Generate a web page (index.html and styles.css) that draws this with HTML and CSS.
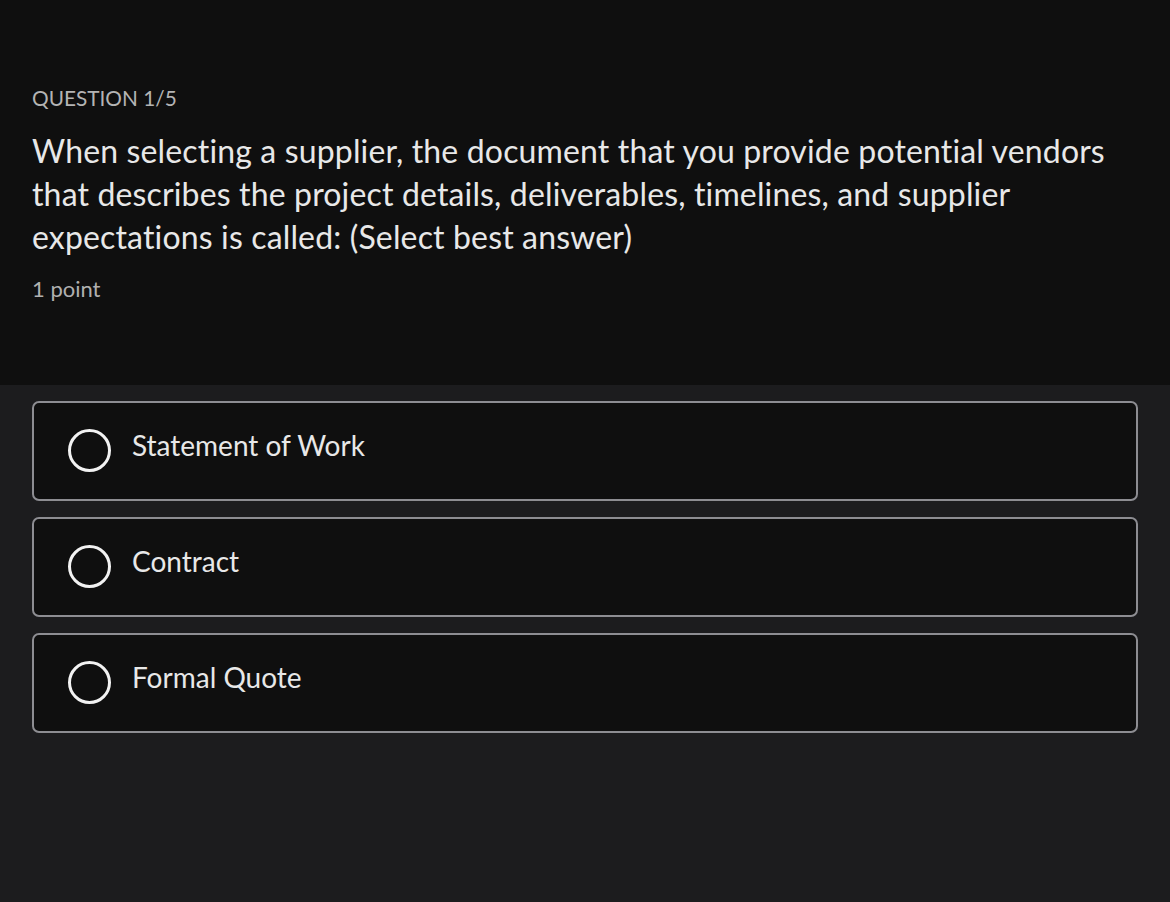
FILE: index.html
```html
<!DOCTYPE html>
<html>
<head>
<meta charset="utf-8">
<link rel="stylesheet" href="styles.css">
</head>
<body>
<div class="page">
  <section class="header">
    <div class="qnum">QUESTION 1/5</div>
    <div class="qtext">When selecting a supplier, the document that you provide potential vendors that describes the project details, deliverables, timelines, and supplier expectations is called: (Select best answer)</div>
    <div class="points">1 point</div>
  </section>
  <section class="options">
    <div class="option"><span class="radio"></span><span class="label">Statement of Work</span></div>
    <div class="option"><span class="radio"></span><span class="label">Contract</span></div>
    <div class="option"><span class="radio"></span><span class="label">Formal Quote</span></div>
  </section>
</div>
</body>
</html>
```
FILE: styles.css
```css
html, body {
  margin: 0;
  padding: 0;
  background: #1c1c1e;
  font-family: Lato, "Open Sans", sans-serif;
  font-variant-ligatures: none;
  color: #e6e6e6;
}
.page {
  width: 1170px;
  height: 902px;
  display: flex;
  flex-direction: column;
}
.header {
  background: #0f0f0f;
  height: 385px;
  box-sizing: border-box;
  padding: 84px 32px 0 32px;
}
.qnum {
  font-size: 20.8px;
  line-height: 28px;
  color: #b4b4b4;
}
.qtext {
  margin-top: 17px;
  font-size: 32px;
  line-height: 43px;
  color: #e8e8e8;
  letter-spacing: 0.15px;
  width: 1100px;
}
.points {
  margin-top: 17px;
  font-size: 22px;
  line-height: 28px;
  color: #b0b0b0;
}
.options {
  padding: 16px 32px 0 32px;
  display: flex;
  flex-direction: column;
  gap: 16px;
}
.option {
  height: 100px;
  box-sizing: border-box;
  border: 2px solid #8d8d92;
  border-radius: 7px;
  background: #0f0f0f;
  display: flex;
  align-items: center;
  padding-left: 34px;
}
.radio {
  width: 43px;
  height: 43px;
  box-sizing: border-box;
  border: 3px solid #f2f2f2;
  border-radius: 50%;
  flex: none;
  margin-top: -1px;
}
.label {
  margin-left: 21px;
  font-size: 28px;
  color: #e8e8e8;
  margin-top: -13px;
}
```
